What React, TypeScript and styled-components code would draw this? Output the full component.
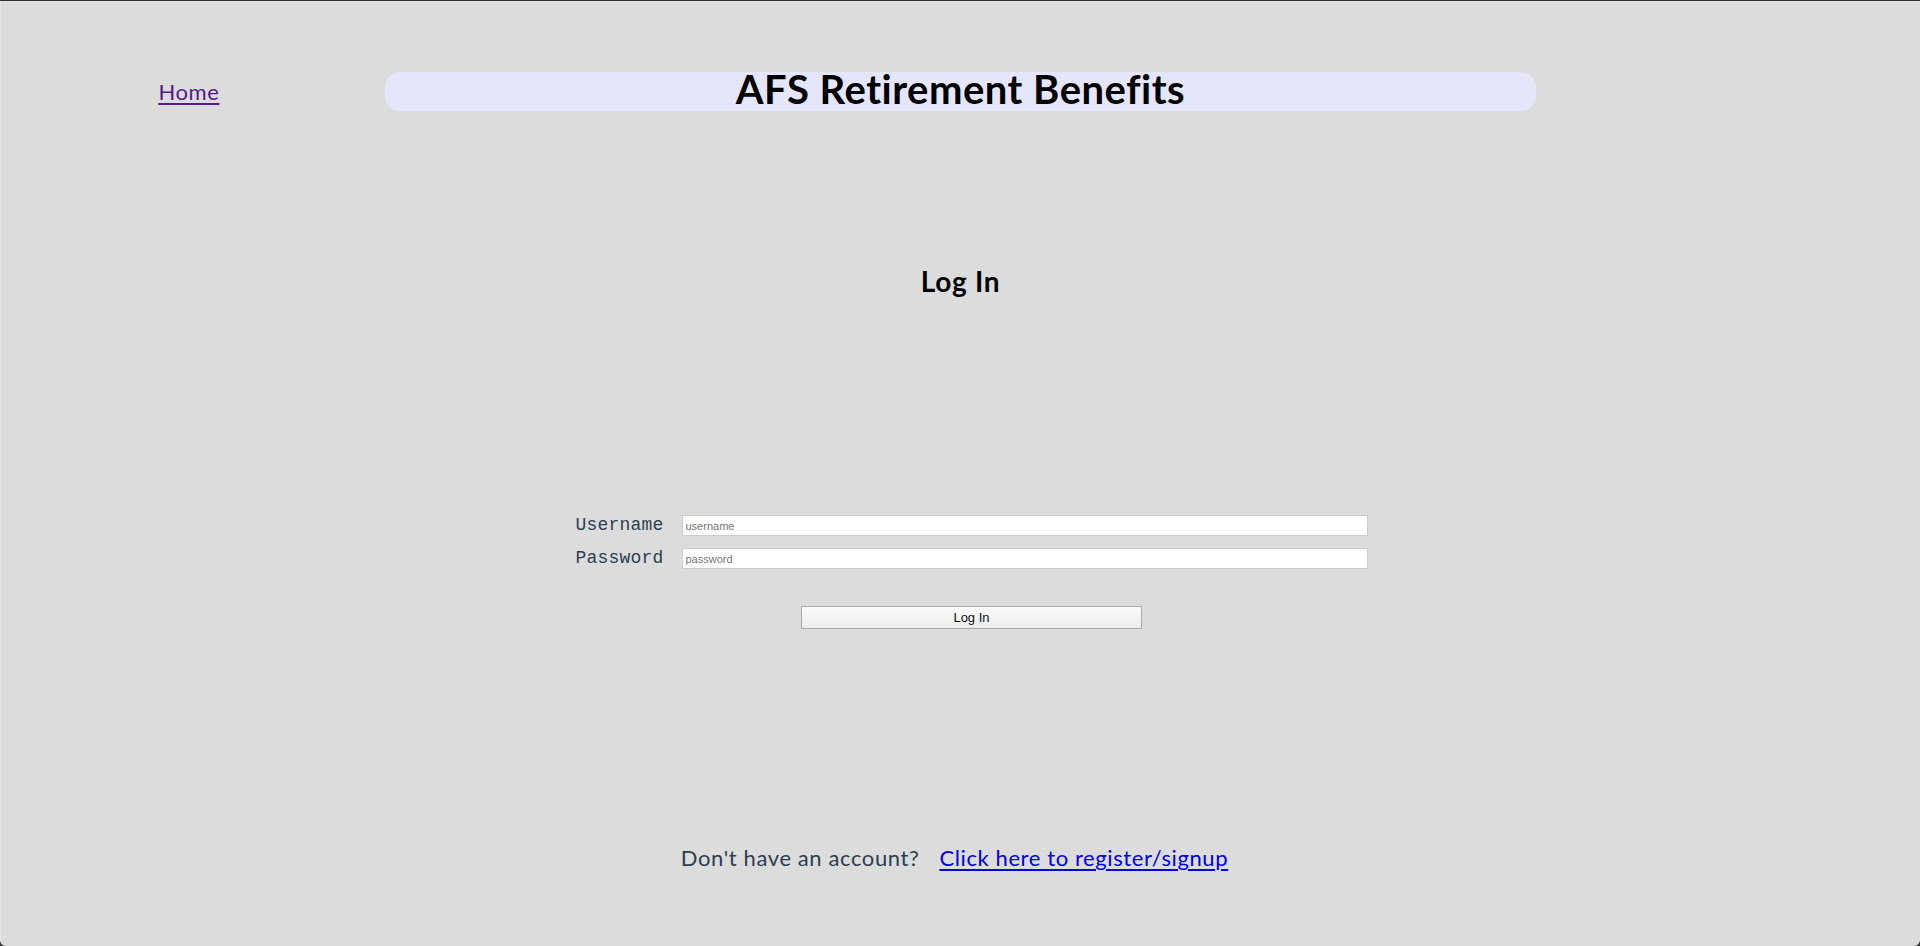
import React from "react"
import styled, { createGlobalStyle } from "styled-components"

const GlobalStyle = createGlobalStyle`
  html,
  body {
    margin: 0;
    padding: 0;
    background: #2f3432;
  }
  * {
    box-sizing: border-box;
  }
`

const App = () => {
  return (
    <>
      <GlobalStyle />
      <Frame>
        <Nav>
          <HomeLink href="#">Home</HomeLink>
          <TitleBar>
            <Title>AFS Retirement Benefits</Title>
          </TitleBar>
        </Nav>

        <Heading>Log In</Heading>

        <FormWrapper>
          <Form onSubmit={(e) => e.preventDefault()}>
            <Label htmlFor="username">Username</Label>
            <Input id="username" type="text" placeholder="username" />
            <Label htmlFor="password">Password</Label>
            <Input id="password" type="password" placeholder="password" />
            <Button type="submit">Log In</Button>
          </Form>
        </FormWrapper>

        <Footer>
          Don't have an account?
          <RegisterLink href="#">Click here to register/signup</RegisterLink>
        </Footer>
      </Frame>
    </>
  )
}

export default App

const Frame = styled.div`
  height: 945px;
  margin-top: 1px;
  overflow: hidden;
  background: #dcdcdc;
  border-left: 1px solid #e4e4e4;
  border-radius: 0 0 6px 6px;
  text-align: center;

  font-family: Lato, "Noto Sans", Helvetica, Arial, sans-serif;
  font-variant-ligatures: none;
  color: #2c3e50;
`
const Nav = styled.nav`
  display: grid;
  grid-template-columns: 20% 60% 20%;
  align-items: center;
  padding-top: 71px;
`
const HomeLink = styled.a`
  justify-self: center;
  margin-right: 8px;
  font-size: 22px;
  letter-spacing: 0.6px;
  color: #551a8b;
  text-decoration: underline;
  text-underline-offset: 3px;
`
const TitleBar = styled.div`
  height: 39px;
  background: #e6e6fa;
  border-radius: 15px;
`
const Title = styled.h1`
  margin: 0;
  font-size: 40px;
  font-weight: 700;
  line-height: 34px;
  letter-spacing: 0.5px;
  color: #000000;
`
const Heading = styled.h2`
  margin: 153px 0 0;
  font-size: 28px;
  font-weight: 700;
  line-height: 34px;
  letter-spacing: 0.7px;
  color: #000000;
`
const FormWrapper = styled.div`
  display: flex;
  justify-content: center;
  margin-top: 217px;
  padding-left: 22px;
`
const Form = styled.form`
  display: grid;
  grid-template-columns: auto 686px;
  column-gap: 18px;
  row-gap: 12px;
  align-items: center;
`
const Label = styled.label`
  font-family: "Liberation Mono", "Courier New", monospace;
  font-size: 18px;
  line-height: 21px;
  letter-spacing: 0.2px;
  color: #2c3e50;
`
const Input = styled.input`
  height: 21px;
  padding: 0 3px;
  background: #ffffff;
  border: 1px solid #cccccc;
  border-radius: 0;
  outline: none;

  font-family: "Liberation Sans", Arial, sans-serif;
  font-size: 11px;
  color: #222222;

  ::placeholder {
    color: #767676;
  }
`
const Button = styled.button`
  grid-column: 1 / -1;
  justify-self: center;
  width: 341px;
  height: 23px;
  margin-top: 25px;
  padding: 0;
  background: linear-gradient(#fbfbfb, #ececec);
  border: 1px solid #a9a9a9;
  border-radius: 0;

  font-family: "Liberation Sans", Arial, sans-serif;
  font-size: 13px;
  color: #111111;
`
const Footer = styled.p`
  margin: 215px 0 0;
  padding-right: 12px;
  font-size: 22px;
  letter-spacing: 0.6px;
  color: #2c3e50;
`
const RegisterLink = styled.a`
  margin-left: 20px;
  color: #0000ee;
  text-decoration: underline;
  text-underline-offset: 3px;
`
